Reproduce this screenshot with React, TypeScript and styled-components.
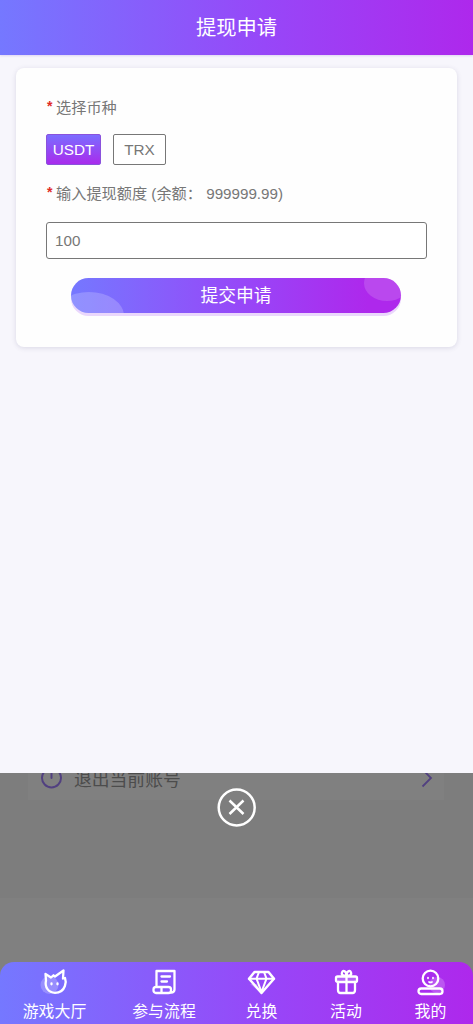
import React from 'react';
import styled, { createGlobalStyle } from 'styled-components';

const Global = createGlobalStyle`
  * { box-sizing: border-box; }
  body { margin: 0; background: #7d7d7d; }
  button, input { font-family: inherit; margin: 0; }
`;

const Screen = styled.div`
  height: 1024px;
  display: flex;
  flex-direction: column;
  overflow: hidden;
  background: #7d7d7d;
  font-family: "Liberation Sans", "Noto Sans CJK SC", sans-serif;
`;

const Sheet = styled.main`
  height: 773px;
  flex: none;
  background: #f7f6fc;
`;

const Header = styled.header`
  height: 55px;
  display: flex;
  align-items: center;
  justify-content: center;
  background: linear-gradient(90deg, #7578ff, #9747f8 56%, #ae28ec);
  box-shadow: 0 1px 2px rgba(120, 80, 200, 0.2);
  color: #fff;
  font-size: 20.3px;
  line-height: 28px;
`;

const Card = styled.form`
  margin: 13px 16px 0;
  height: 279px;
  padding: 26px 30px 0;
  background: #fefefe;
  border-radius: 8px;
  box-shadow: 0 1px 5px rgba(70, 60, 110, 0.16);
`;

const Label = styled.div`
  display: flex;
  align-items: center;
  height: 24px;
  font-size: 15.2px;
  color: #777;
  white-space: pre;
`;

const Star = styled.span`
  width: 10px;
  padding-left: 1px;
  color: #e02b26;
  font-size: 14px;
  font-weight: bold;
`;

const Options = styled.div`
  display: flex;
  gap: 12px;
  margin: 16px 0 15px;
`;

const Option = styled.button<{ $active?: boolean }>`
  width: ${p => (p.$active ? 55 : 53)}px;
  height: 31px;
  padding: 0;
  border-radius: 2px;
  border: 1px solid ${p => (p.$active ? '#8a52dc' : '#777')};
  background: ${p => (p.$active ? 'linear-gradient(180deg, #7b6dff, #a92bec)' : '#fff')};
  color: ${p => (p.$active ? '#fff' : '#777')};
  font-size: 15.3px;
`;

const Amount = styled.input`
  display: block;
  width: 381px;
  height: 37px;
  margin-top: 18px;
  padding: 0 8px 1px;
  border: 1px solid #777;
  border-radius: 3px;
  background: #fff;
  color: #777;
  font-size: 15.2px;
  outline: none;
`;

const Submit = styled.button`
  position: relative;
  display: block;
  width: 330px;
  height: 35px;
  margin: 19px 0 0 25px;
  padding: 0 0 3px;
  border: 0;
  border-radius: 18px;
  background: linear-gradient(90deg, #7578ff, #9747f8 52%, #ae28ec 90%);
  box-shadow: 0 3px 0 #ead7fc;
  color: #fff;
  font-size: 17.8px;
`;

const Bubbles = styled.svg`
  position: absolute;
  inset: 0;
  border-radius: 18px;
`;

const SubmitText = styled.span`
  position: relative;
`;

const Backdrop = styled.section`
  flex: 1;
  display: flex;
  flex-direction: column;
  background: #7d7d7d;
`;

const AccountRow = styled.div`
  height: 27px;
  margin: 0 29px 0 28px;
  padding: 0 10px 0 12px;
  display: flex;
  align-items: flex-start;
  overflow: hidden;
  background: #808080;
  color: #4c4c4c;
  font-size: 17.8px;
  line-height: 26px;
  svg { flex: none; }
`;

const AccountText = styled.span`
  flex: 1;
  margin: -6px 0 0 10px;
`;

const CloseButton = styled.button`
  width: 40px;
  height: 40px;
  margin: -13px auto 0;
  padding: 0;
  border: 0;
  background: none;
  svg { display: block; }
`;

const Fill = styled.div`
  height: 126px;
  margin-top: auto;
  background: #808080;
`;

const Nav = styled.nav`
  position: relative;
  height: 62px;
  margin-top: -62px;
  flex: none;
  display: grid;
  grid-template-columns: 109px 110px 85px 84px 85px;
  border-radius: 14px 14px 0 0;
  background: linear-gradient(90deg, #7578ff, #9747f8 56%, #ae28ec);
`;

const NavItem = styled.a`
  display: flex;
  flex-direction: column;
  align-items: center;
  padding-top: 6px;
  color: #fff;
  font-size: 15.9px;
  line-height: 24px;
  svg { margin-bottom: 3px; overflow: visible; flex: none; }
`;

const icons: Record<string, React.ReactNode> = {
  游戏大厅: (
    <>
      <circle cx="8.500" cy="17" r="9" fill="#fff" stroke="none" opacity=".22" />
      <path d="M5 12.500 4.500 6l5.500 3.500 2.500-2.200 1.500 1.200L22.500 2.500l-.5 8 2-.5c.8 2 .8 5.500-.1 8-1.600 4.500-5.400 6.800-9.900 6.800-6.500 0-10.500-5.600-9-12.300Z" />
      <path d="M10.500 15.500v.8M16.500 15.500v.8" />
    </>
  ),
  参与流程: (
    <>
      <path d="M5.500 17.500V3h18v18.500q0 3-3.500 3" />
      <rect x="2.500" y="19" width="17.500" height="6" rx="2.500" />
      <path d="M10.500 8.500h8.500M10.500 13.500h5.500M10.500 19.500v5" />
    </>
  ),
  兑换: (
    <>
      <path d="m2 16 11 9-4-9Z" fill="#fff" stroke="none" opacity=".22" />
      <path d="M6.500 4h14l5.500 6.700L13.500 25 1 10.700Z" strokeWidth="2.500" />
      <path d="M1 10.700h25M11 4 8.500 10.700 13.500 24l5-13.300L16 4" strokeWidth="2" />
    </>
  ),
  活动: (
    <>
      <path d="M3 9h21v5H3z" fill="#fff" stroke="none" opacity=".22" />
      <rect x="3" y="8.500" width="21" height="5.500" rx="1.500" />
      <path d="M5 14v8q0 3 2.500 3h12Q22 25 22 22v-8M13.500 8v17M13.500 8C11 8 8 7.500 9 4.500S13.500 3 13.500 8ZM13.500 8c2.500 0 5.500-.5 4.500-3.500S13.500 3 13.500 8Z" />
    </>
  ),
  我的: (
    <>
      <circle cx="20" cy="17" r="8" fill="#fff" stroke="none" opacity=".2" />
      <circle cx="13.500" cy="10.500" r="7.800" />
      <rect x="1.500" y="20.500" width="24" height="5.500" rx="2.700" />
      <path d="M11 9.500v.8M16 9.500v.8M12 14q1.500.8 3 0" strokeWidth="1.700" />
    </>
  ),
};

export default function App() {
  return (
    <>
      <Global />
      <Screen>
        <Sheet>
          <Header>提现申请</Header>
          <Card>
            <Label><Star>*</Star>选择币种</Label>
            <Options>
              <Option type="button" $active>USDT</Option>
              <Option type="button">TRX</Option>
            </Options>
            <Label><Star>*</Star>输入提现额度 (余额： 999999.99)</Label>
            <Amount defaultValue="100" />
            <Submit type="button">
              <Bubbles width="330" height="35" viewBox="0 0 330 35">
                <ellipse cx="18" cy="38" rx="35" ry="24" fill="#fff" opacity=".2" />
                <ellipse cx="316" cy="5" rx="23" ry="18" fill="#fff" opacity=".15" />
              </Bubbles>
              <SubmitText>提交申请</SubmitText>
            </Submit>
          </Card>
        </Sheet>
        <Backdrop>
          <AccountRow>
            <svg width="24" height="18" viewBox="0 0 24 18" fill="none" stroke="#514080" strokeWidth="2" strokeLinecap="round">
              <path d="M5 -2a9.500 9.500 0 1 0 13 0M11.500-3v8" />
            </svg>
            <AccountText>退出当前账号</AccountText>
            <svg width="14" height="16" viewBox="0 0 14 16" fill="none" stroke="#514080" strokeWidth="1.800">
              <path d="m2-4 9 9-8.500 8.500" />
            </svg>
          </AccountRow>
          <CloseButton type="button" aria-label="关闭">
            <svg width="40" height="40" viewBox="0 0 40 40" fill="none" stroke="#fff" strokeWidth="2.500">
              <circle cx="19.700" cy="20.500" r="18" />
              <path d="m12.500 13.500 14 13.500M26.500 13.500 12.500 27" />
            </svg>
          </CloseButton>
          <Fill />
        </Backdrop>
        <Nav>
          {Object.entries(icons).map(([name, icon]) => (
            <NavItem key={name}>
              <svg width="27" height="29" viewBox="0 0 27 29" fill="none" stroke="#fff" strokeWidth="2.300" strokeLinejoin="round" strokeLinecap="round">
                {icon}
              </svg>
              {name}
            </NavItem>
          ))}
        </Nav>
      </Screen>
    </>
  );
}
